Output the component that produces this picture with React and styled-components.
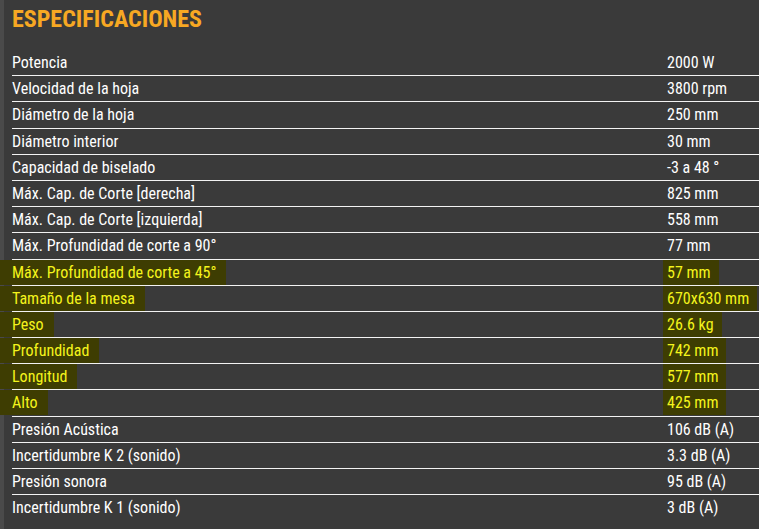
import React from "react";
import styled, { createGlobalStyle } from "styled-components";

const specs = [
  ["Potencia", "2000 W"],
  ["Velocidad de la hoja", "3800 rpm"],
  ["Diámetro de la hoja", "250 mm"],
  ["Diámetro interior", "30 mm"],
  ["Capacidad de biselado", "-3 a 48 °"],
  ["Máx. Cap. de Corte [derecha]", "825 mm"],
  ["Máx. Cap. de Corte [izquierda]", "558 mm"],
  ["Máx. Profundidad de corte a 90°", "77 mm"],
  ["Máx. Profundidad de corte a 45°", "57 mm", true],
  ["Tamaño de la mesa", "670x630 mm", true],
  ["Peso", "26.6 kg", true],
  ["Profundidad", "742 mm", true],
  ["Longitud", "577 mm", true],
  ["Alto", "425 mm", true],
  ["Presión Acústica", "106 dB (A)"],
  ["Incertidumbre K 2 (sonido)", "3.3 dB (A)"],
  ["Presión sonora", "95 dB (A)"],
  ["Incertidumbre K 1 (sonido)", "3 dB (A)"],
];

const App = () => {
  return (
    <>
      <GlobalStyle />
      <Page>
        <Edge />
        <Content>
          <Title>ESPECIFICACIONES</Title>
          <Table>
            {specs.map(([label, value, marked]) => (
              <Row key={label}>
                <Cell>
                  <Mark $on={marked} $lead>
                    {label}
                  </Mark>
                </Cell>
                <Cell>
                  <Mark $on={marked}>{value}</Mark>
                </Cell>
              </Row>
            ))}
          </Table>
        </Content>
      </Page>
    </>
  );
};

export default App;

const GlobalStyle = createGlobalStyle`
  body {
    margin: 0;
    background: #3a3a3a;
    font-family: "Roboto Condensed", "Liberation Sans Narrow", Roboto, sans-serif;
  }
`;

const Page = styled.div`
  display: flex;
  min-height: 529px;
  background: #3a3a3a;
`;

const Edge = styled.div`
  width: 4px;
  flex-shrink: 0;
  background: #4a4a4a;
`;

const Content = styled.div`
  flex: 1;
  padding-left: 8px;
`;

const Title = styled.h2`
  margin: 0;
  padding: 5px 0 0;
  height: 50px;
  box-sizing: border-box;
  font-size: 24px;
  line-height: 28px;
  font-weight: 700;
  color: #f7a823;
`;

const Table = styled.div`
  display: flex;
  flex-direction: column;
`;

const Row = styled.div`
  display: grid;
  grid-template-columns: 655px 1fr;
  border-bottom: 1px solid #f2f2f2;
  padding: 3px 0 2.2px;
  font-size: 16px;
  line-height: 20px;
  color: #ffffff;

  &:last-child {
    border-bottom: none;
  }
`;

const Cell = styled.div`
  white-space: nowrap;
`;

const Mark = styled.span`
  color: ${(p) => (p.$on ? "#f4f41c" : "#ffffff")};
  background: ${(p) => (p.$on ? "#3e3d02" : "transparent")};
  padding: ${(p) => (p.$on ? (p.$lead ? "3px 10px 3px 12px" : "3px 8px 3px 4px") : "0")};
  margin-left: ${(p) => (p.$on ? (p.$lead ? "-12px" : "-4px") : "0")};
`;
